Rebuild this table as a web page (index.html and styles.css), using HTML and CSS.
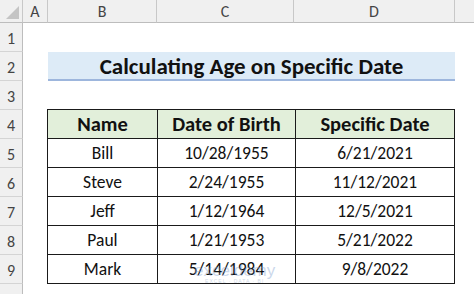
FILE: index.html
```html
<!DOCTYPE html>
<html>
<head>
<meta charset="utf-8">
<link rel="stylesheet" href="styles.css">
</head>
<body>
<div class="sheet">
  <div class="corner"><span class="tri"></span></div>
  <div class="colh">A</div>
  <div class="colh">B</div>
  <div class="colh">C</div>
  <div class="colh">D</div>
  <div class="colh last"></div>

  <div class="rowh r1">1</div>
  <div class="rowh r2">2</div>
  <div class="rowh r3">3</div>
  <div class="rowh r4">4</div>
  <div class="rowh r5">5</div>
  <div class="rowh r6">6</div>
  <div class="rowh r7">7</div>
  <div class="rowh r8">8</div>
  <div class="rowh r9">9</div>
  <div class="rowh r10"></div>

  <div class="title">Calculating Age on Specific Date</div>

  <table class="data">
    <tr class="head"><th>Name</th><th>Date of Birth</th><th>Specific Date</th></tr>
    <tr><td>Bill</td><td>10/28/1955</td><td>6/21/2021</td></tr>
    <tr><td>Steve</td><td>2/24/1955</td><td>11/12/2021</td></tr>
    <tr><td>Jeff</td><td>1/12/1964</td><td>12/5/2021</td></tr>
    <tr><td>Paul</td><td>1/21/1953</td><td>5/21/2022</td></tr>
    <tr><td>Mark</td><td>5/14/1984</td><td>9/8/2022</td></tr>
  </table>

  <div class="mark"><span class="mark-name">exceldemy</span><span class="mark-sub">EXCEL · DATA · BI</span></div>
</div>
</body>
</html>
```
FILE: styles.css
```css
html, body {
  margin: 0;
  padding: 0;
  background: #ffffff;
}
body {
  width: 474px;
  height: 294px;
  overflow: hidden;
  font-family: Carlito, "Open Sans", "Liberation Sans", sans-serif;
}
.sheet {
  position: relative;
  display: grid;
  grid-template-columns: 23px 25px 109px 137px 161px 19px;
  grid-template-rows: 23px repeat(9, 29px) 10px;
  width: 474px;
  height: 294px;
  overflow: hidden;
}
.corner {
  grid-row: 1;
  grid-column: 1;
  background: #f0f0f0;
  border-right: 1px solid #c8c8c8;
  border-bottom: 1px solid #bdbdbd;
  position: relative;
}
.tri {
  position: absolute;
  right: 3px;
  bottom: 3px;
  width: 0;
  height: 0;
  border-left: 13px solid transparent;
  border-bottom: 13px solid #c4c4c4;
}
.colh {
  grid-row: 1;
  background: #f0f0f0;
  border-right: 1px solid #c8c8c8;
  border-bottom: 1px solid #bdbdbd;
  color: #444444;
  font-size: 16px;
  display: flex;
  align-items: center;
  justify-content: center;
  padding-top: 1px;
}
.colh.last {
  border-right: none;
}
.rowh {
  grid-column: 1;
  background: #f0f0f0;
  border-right: 1px solid #bdbdbd;
  border-bottom: 1px solid #d4d4d4;
  color: #444444;
  font-size: 16px;
  display: flex;
  align-items: center;
  justify-content: center;
  padding-top: 2px;
}
.r1 { grid-row: 2; }
.r2 { grid-row: 3; }
.r3 { grid-row: 4; }
.r4 { grid-row: 5; }
.r5 { grid-row: 6; }
.r6 { grid-row: 7; }
.r7 { grid-row: 8; }
.r8 { grid-row: 9; }
.r9 { grid-row: 10; }
.r10 { grid-row: 11; border-bottom: none; }

.title {
  grid-row: 3;
  grid-column: 3 / 6;
  background: #ddebf7;
  border-bottom: 2px solid #9db6dd;
  font-weight: bold;
  font-size: 23px;
  color: #111111;
  display: flex;
  align-items: center;
  justify-content: center;
  padding-top: 1px;
}

.data {
  grid-row: 5 / 11;
  grid-column: 3 / 6;
  border-collapse: collapse;
  width: 408px;
  height: 174px;
  margin-left: -1px;
  margin-top: -1px;
  font-size: 17.5px;
  color: #111111;
  table-layout: fixed;
}
.data th, .data td {
  border: 1.5px solid #1a1a1a;
  text-align: center;
  padding: 0;
  height: 28px;
}
.data th:nth-child(1), .data td:nth-child(1) { width: 109px; }
.data th:nth-child(2), .data td:nth-child(2) { width: 137px; }
.data th {
  background: #e2efda;
  font-weight: bold;
  font-size: 20.5px;
}

.mark {
  position: absolute;
  left: 194px;
  top: 263px;
  display: flex;
  flex-direction: column;
  align-items: center;
  opacity: 0.4;
  pointer-events: none;
}
.mark-name {
  font-family: "Liberation Sans", sans-serif;
  font-size: 17px;
  color: #7f9fd0;
  line-height: 15px;
}
.mark-sub {
  font-family: "Liberation Sans", sans-serif;
  font-size: 5px;
  letter-spacing: 1px;
  color: #8aa4c8;
  line-height: 6px;
}
```
